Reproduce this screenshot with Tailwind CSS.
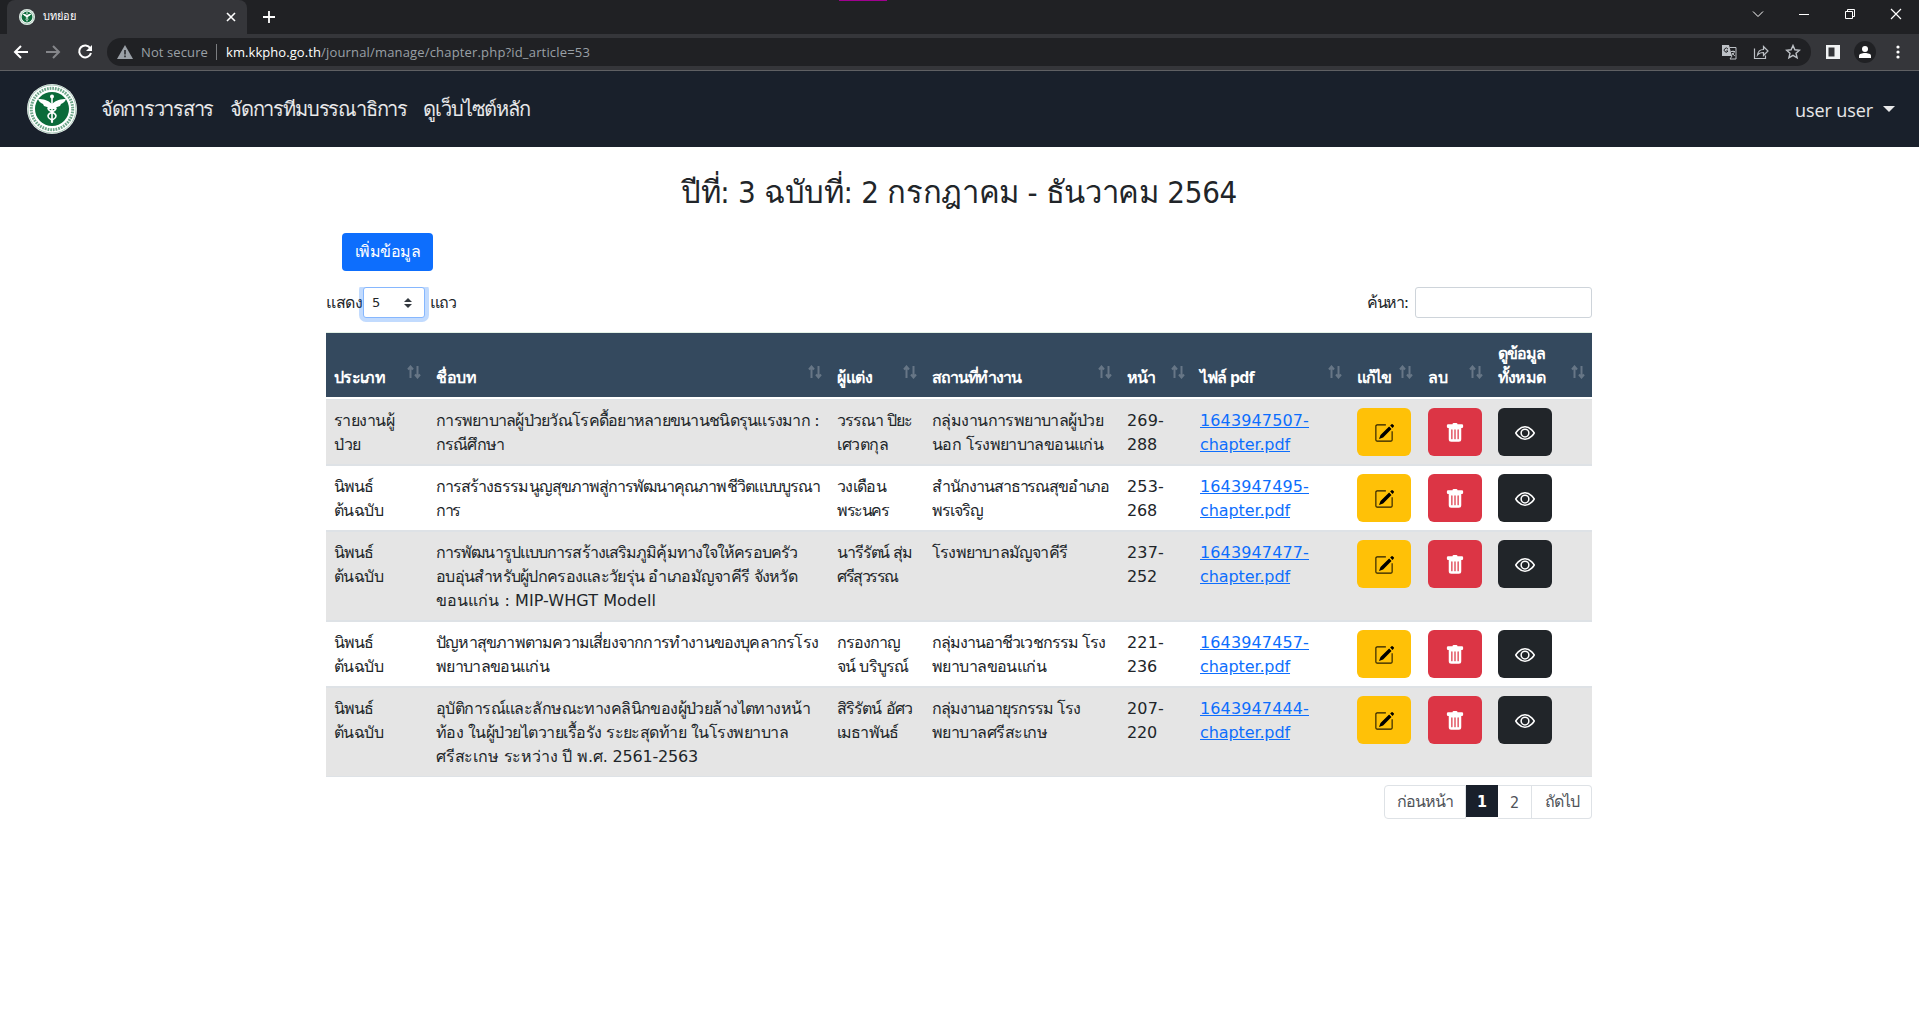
<!DOCTYPE html>
<html lang="th">
<head>
<meta charset="utf-8">
<title>บทย่อย</title>
<script src="https://cdn.jsdelivr.net/npm/@tailwindcss/browser@4"></script>
</head>
<body class="h-[1034px] overflow-hidden bg-white font-['DejaVu_Sans','Noto_Sans',sans-serif] text-base leading-6 text-[#212529]">
<svg class="hidden">
  <symbol id="edit" viewBox="0 0 16 16"><path d="M15.300 1.300a1.200 1.200 0 0 0-1.700 0l-.7.7 1.900 1.900.7-.7a1.200 1.200 0 0 0-.2-1.900zM14 4.700 12.100 2.800 5.200 9.500l-1.200 3.200 3.300-1.200z"/><path d="M9.500 1.500h-7a1 1 0 0 0-1 1v11a1 1 0 0 0 1 1h11a1 1 0 0 0 1-1v-7" fill="none" stroke="currentColor" stroke-width=".9" opacity=".85"/></symbol>
  <symbol id="trash" viewBox="0 0 16 16"><path d="M2.500 1a1 1 0 0 0-1 1v1a1 1 0 0 0 1 1H3v9a2 2 0 0 0 2 2h6a2 2 0 0 0 2-2V4h.5a1 1 0 0 0 1-1V2a1 1 0 0 0-1-1H10a1 1 0 0 0-1-1H7a1 1 0 0 0-1 1H2.500zm3 4a.5.5 0 0 1 .5.5v7a.5.5 0 0 1-1 0v-7a.5.5 0 0 1 .5-.5zM8 5a.5.5 0 0 1 .5.5v7a.5.5 0 0 1-1 0v-7A.5.5 0 0 1 8 5zm3 .5v7a.5.5 0 0 1-1 0v-7a.5.5 0 0 1 1 0z"/></symbol>
  <symbol id="eye" viewBox="0 0 16 16"><path d="M.6 8S3.500 3 8 3s7.400 5 7.400 5-2.900 5-7.400 5S.6 8 .6 8z" fill="none" stroke="currentColor" stroke-width="1.200"/><circle cx="8" cy="8" r="3.100" fill="none" stroke="currentColor" stroke-width="1.200"/></symbol>
  <symbol id="sort" viewBox="0 0 14 14"><path d="M3.500 13V2M1 4.500 3.500 1.500 6 4.500M10.500 1v11M8 9.500l2.500 3 2.500-3" fill="none" stroke="currentColor" stroke-width="2"/></symbol>
  <symbol id="seal" viewBox="0 0 50 50"><circle cx="25" cy="25" r="25" fill="#fff"/><circle cx="25" cy="25" r="24" fill="none" stroke="#0b6b3a" stroke-width=".6" opacity=".6"/><circle cx="25" cy="25" r="20.700" fill="none" stroke="#0b6b3a" stroke-width="3" stroke-dasharray="1.700 1" opacity=".6"/><circle cx="25" cy="25" r="17" fill="#0b6b3a"/><path d="M25 11v28M21 24c0 4 8 4 8 8s-6 3-4 6M29 24c0 4-8 4-8 8s6 3 4 6" fill="none" stroke="#fff" stroke-width="1.600"/><path d="M11 15c5 0 10 1 14 5 4-4 9-5 14-5-1 3-3 4-5 5l-1 2-3 1-2 2h-6l-2-2-3-1-1-2c-2-1-4-2-5-5z" fill="#fff"/><circle cx="25" cy="12.500" r="2" fill="#fff"/></symbol>
</svg>

<!-- browser tabs -->
<div class="relative flex h-[34px] bg-[#202124] pl-[7px]">
  <div class="absolute top-0 left-[839px] h-px w-12 bg-[#a0008f]"></div>
  <div class="flex w-[240px] items-center rounded-t-lg bg-[#35363a] pr-[10px] pl-3">
    <svg class="size-4"><use href="#seal"/></svg>
    <span class="ml-2 text-[11px] text-white" data-w="33">บทย่อย</span>
    <svg class="ml-auto size-3" viewBox="0 0 12 12" fill="none" stroke="#fff" stroke-width="1.600"><path d="m2 2 8 8M10 2l-8 8"/></svg>
  </div>
  <svg class="mt-[11px] ml-4 size-3" viewBox="0 0 12 12" stroke="#fff" stroke-width="1.800"><path d="M0 6h12M6 0v12"/></svg>
  <div class="ml-auto flex h-[28px] items-center gap-[34px] pr-[17px]">
    <svg class="size-3" viewBox="0 0 12 12" fill="none" stroke="#fff"><path d="m1 3.500 5 5 5-5"/></svg>
    <svg class="size-3" viewBox="0 0 12 12" stroke="#fff"><path d="M1 6.500h10"/></svg>
    <svg class="size-3" viewBox="0 0 12 12" fill="none" stroke="#fff"><path d="M1.500 3.500h7v7h-7zM3.500 3.500v-2h7v7h-2"/></svg>
    <svg class="size-3" viewBox="0 0 12 12" stroke="#fff" stroke-width="1.200"><path d="m1 1 10 10M11 1 1 11"/></svg>
  </div>
</div>

<!-- address bar -->
<div class="flex h-[37px] items-start border-b border-[#5f6063] bg-[#35363a] pt-1 pl-[13px] font-['Open_Sans','Noto_Sans',sans-serif] text-[13px]">
  <div class="flex h-7 w-[94px] items-center gap-4">
    <svg class="size-4" viewBox="0 0 16 16" fill="none" stroke="#fff" stroke-width="2"><path d="M15 8H2M8 2 2 8l6 6"/></svg>
    <svg class="size-4" viewBox="0 0 16 16" fill="none" stroke="#85868a" stroke-width="2"><path d="M1 8h13M8 2l6 6-6 6"/></svg>
    <svg class="size-4" viewBox="0 0 16 16" fill="none" stroke="#fff" stroke-width="2"><path d="M13.300 4.200A6 6 0 1 0 14 9"/><path d="M15 1v6H9z" fill="#fff" stroke="none"/></svg>
  </div>
  <div class="flex h-7 w-[1704px] items-center rounded-full bg-[#202124] pr-[10px] pl-[10px]">
    <svg class="h-[14px] w-4" viewBox="0 0 16 14"><path d="M8 0l8 14H0z" fill="#9aa0a6"/><path d="M8 5v4.500M8 10.500v1.700" stroke="#202124" stroke-width="1.500"/></svg>
    <span class="ml-2 w-[75px] whitespace-nowrap text-[#9aa0a6]"><span data-w="67">Not secure</span></span>
    <span class="h-4 w-px bg-[#7b7d80]"></span>
    <span class="ml-[9px] text-white" data-w="95">km.kkpho.go.th</span><span class="text-[#9aa0a6]" data-w="269">/journal/manage/chapter.php?id_article=53</span>
    <div class="ml-auto flex items-center gap-4">
      <svg class="size-4" viewBox="0 0 16 16"><path d="M1 1h7l3 11H1z" fill="#bdc1c6"/><path d="M8.500 3.500H15V15H9l2-3" fill="none" stroke="#bdc1c6"/><path d="M10 7.500h4M12 6.500v1M13.300 7.500c0 2-1.500 3-3 4M11 9l2.800 3" fill="none" stroke="#bdc1c6"/><path d="M7 5.200A2 2 0 1 0 7 7H5.200" fill="none" stroke="#202124"/></svg>
      <svg class="size-4" viewBox="0 0 16 16" fill="none" stroke="#bdc1c6" stroke-width="1.200"><path d="M1.500 4.500v10h11v-3M4.500 11c.5-4 3-5.500 6-5.500V2.500L15 7l-4.500 4.500V8.500c-3 0-4.500.5-6 2.500z"/></svg>
      <svg class="size-4" viewBox="0 0 16 16" fill="none" stroke="#bdc1c6" stroke-width="1.400"><path d="m8 1.500 1.900 4.300 4.600.4-3.500 3 1.100 4.600L8 11.400l-4.100 2.400L5 9.200l-3.500-3 4.600-.4z"/></svg>
    </div>
  </div>
  <svg class="mt-[7px] ml-[15px] size-[14px]" viewBox="0 0 14 14"><path d="M0 0h14v14H0z" fill="#f1f3f4"/><path d="M2.500 2.500h6v9h-6z" fill="#35363a"/></svg>
  <div class="mt-[3px] ml-[14px] flex size-[22px] items-center justify-center rounded-full bg-[#202124]"><svg class="size-3" viewBox="0 0 12 12" fill="#fff"><circle cx="6" cy="3" r="3"/><path d="M0 12V9.800C0 8 3 7 6 7s6 1 6 2.800V12z"/></svg></div>
  <svg class="mt-[7px] ml-[20px] h-[14px] w-1" viewBox="0 0 4 14" fill="#fff"><circle cx="2" cy="2" r="1.600"/><circle cx="2" cy="7" r="1.600"/><circle cx="2" cy="12" r="1.600"/></svg>
</div>

<!-- site navigation -->
<nav class="flex h-[76px] items-center bg-[#19202b] pr-6 pl-[27px] font-['Open_Sans','Noto_Sans',sans-serif] text-[20px] text-white/90">
  <svg class="size-[50px]"><use href="#seal"/></svg>
  <a class="ml-6" data-w="112">จัดการวารสาร</a>
  <a class="ml-[17px]" data-w="177">จัดการทีมบรรณาธิการ</a>
  <a class="ml-4" data-w="107">ดูเว็บไซต์หลัก</a>
  <a class="ml-auto pt-0.5 text-[18px]" data-w="78">user user</a>
  <span class="ml-[10px] border-x-6 border-t-6 border-x-transparent"></span>
</nav>

<main class="ml-[326px] w-[1266px]">
  <h1 class="mt-[26px] h-9 text-center font-['DejaVu_Sans_Condensed','DejaVu_Sans',sans-serif] text-[31px] leading-[38px]"><span data-w="556">ปีที่: 3 ฉบับที่: 2 กรกฎาคม - ธันวาคม 2564</span></h1>
  <button class="mt-6 ml-4 block h-[38px] w-[91px] rounded bg-[#0d6efd] text-white"><span data-w="65">เพิ่มข้อมูล</span></button>
  <div class="mt-4 flex h-[31px] items-center">
    <span data-w="36">แสดง</span>
    <div class="ml-px [clip-path:inset(0_-6px_-6px_-6px)]">
      <div class="flex h-[31px] w-[62px] items-center justify-between rounded-[3px] border border-[#86b7fe] bg-white pr-3 pl-2 text-[13px] shadow-[0_0_0_4px_#0d6efd40]"><span>5</span>
      <svg class="h-[10px] w-2" viewBox="0 0 8 10" fill="#343a40"><path d="M4 0l4 4H0zM4 10l4-4H0z"/></svg></div>
    </div>
    <span class="ml-[5px]" data-w="26">แถว</span>
    <span class="ml-auto" data-w="41">ค้นหา:</span>
    <input class="ml-[7px] h-[31px] w-[177px] rounded-[3px] border border-[#ced4da]">
  </div>
  <div class="mt-[14px] border-t border-[#e3f1e6]"></div>
  <div id="head" class="grid h-16 grid-cols-[102px_401px_95px_195px_73px_157px_71px_70px_102px] items-end bg-[#34495e] font-['Open_Sans','Noto_Sans',sans-serif] font-bold text-white"></div>
  <div id="rows" class="mt-0.5"></div>
  <div class="mt-2 flex h-[34px] items-start justify-end text-[#4f5359]">
    <div class="flex h-[34px] w-[82px] items-center justify-center rounded-l border border-[#dee2e6]"><span data-w="56">ก่อนหน้า</span></div>
    <div class="flex h-8 w-8 items-center justify-center bg-[#19202b] pt-0.5 font-['DejaVu_Sans_Condensed'] font-bold text-white">1</div>
    <div class="flex h-[34px] w-[34px] items-center justify-center border-y border-r border-[#dee2e6] pt-0.5 font-['DejaVu_Sans_Condensed']">2</div>
    <div class="flex h-[34px] w-[60px] items-center justify-center rounded-r border border-l-0 border-[#dee2e6]"><span data-w="34">ถัดไป</span></div>
  </div>
</main>

<script>
const heads = [[["ประเภท",51]],[["ชื่อบท",40]],[["ผู้แต่ง",35]],[["สถานที่ทำงาน",89]],[["หน้า",28]],[["ไฟล์ pdf",54]],[["แก้ไข",33]],[["ลบ",20]],[["ดูข้อมูล",47],["ทั้งหมด",47]]];
const original = [["นิพนธ์",39],["ต้นฉบับ",49]];
const pages = (a, b) => [[a + "-",37],[b,30]];
const file = n => [[n + "-",109],["chapter.pdf",90]];
const rows = [
  [[["รายงานผู้",60],["ป่วย",27]], [["การพยาบาลผู้ป่วยวัณโรคดื้อยาหลายขนานชนิดรุนแรงมาก :",383],["กรณีศึกษา",68]], [["วรรณา ปิยะ",75],["เศวตกุล",51]], [["กลุ่มงานการพยาบาลผู้ป่วย",171],["นอก โรงพยาบาลขอนแก่น",171]], pages("269","288"), file("1643947507")],
  [original, [["การสร้างธรรมนูญสุขภาพสู่การพัฒนาคุณภาพชีวิตแบบบูรณา",384],["การ",24]], [["วงเดือน",49],["พระนคร",51]], [["สำนักงานสาธารณสุขอำเภอ",177],["พรเจริญ",51]], pages("253","268"), file("1643947495")],
  [original, [["การพัฒนารูปแบบการสร้างเสริมภูมิคุ้มทางใจให้ครอบครัว",361],["อบอุ่นสำหรับผู้ปกครองและวัยรุ่น อำเภอมัญจาคีรี จังหวัด",361],["ขอนแก่น : MIP-WHGT Modell",220]], [["นารีรัตน์ สุ่ม",75],["ศรีสุวรรณ",61]], [["โรงพยาบาลมัญจาคีรี",135]], pages("237","252"), file("1643947477")],
  [original, [["ปัญหาสุขภาพตามความเสี่ยงจากการทำงานของบุคลากรโรง",382],["พยาบาลขอนแก่น",113]], [["กรองกาญ",63],["จน์ บริบูรณ์",71]], [["กลุ่มงานอาชีวเวชกรรม โรง",173],["พยาบาลขอนแก่น",114]], pages("221","236"), file("1643947457")],
  [original, [["อุบัติการณ์และลักษณะทางคลินิกของผู้ป่วยล้างไตทางหน้า",374],["ท้อง ในผู้ป่วยไตวายเรื้อรัง ระยะสุดท้าย ในโรงพยาบาล",352],["ศรีสะเกษ ระหว่าง ปี พ.ศ. 2561-2563",262]], [["สิริรัตน์ อัศว",75],["เมธาพันธ์",61]], [["กลุ่มงานอายุรกรรม โรง",148],["พยาบาลศรีสะเกษ",115]], pages("207","220"), file("1643947444")]
];
const lines = c => c.map(([t, w]) => `<div class="h-6"><span data-w="${w}">${t}</span></div>`).join("");
document.getElementById("head").innerHTML = heads.map(c => `<div class="flex items-end justify-between p-2"><div>${lines(c)}</div><svg class="-mr-px mb-[10px] size-[14px] text-white/25"><use href="#sort"/></svg></div>`).join("");
const btn = (icon, cls) => `<div class="p-2"><button class="flex h-12 w-[54px] items-center justify-center rounded-md pt-0.5 ${cls}"><svg class="size-5" fill="currentColor"><use href="#${icon}"/></svg></button></div>`;
document.getElementById("rows").innerHTML = rows.map(r => `<div class="grid grid-cols-[102px_401px_95px_195px_73px_157px_71px_70px_102px] border-y border-[#dee2e6] odd:bg-[#e5e5e5]">${r.map((c, i) => `<div class="px-2 pt-[9px] pb-[7px] ${i === 5 ? "text-[#0d6efd] underline" : ""}">${lines(c)}</div>`).join("")}${btn("edit", "bg-[#ffc107] text-black")}${btn("trash", "bg-[#dc3545] text-white")}${btn("eye", "bg-[#212529] text-white")}</div>`).join("");

const seg = new Intl.Segmenter("th", {granularity: "grapheme"});
function fit() {
  document.querySelectorAll("[data-w]").forEach(e => {
    e.style.whiteSpace = "nowrap";
    e.style.letterSpacing = "0px";
    const range = document.createRange();
    range.selectNodeContents(e);
    const n = [...seg.segment(e.textContent)].length;
    e.style.letterSpacing = (e.dataset.w - range.getBoundingClientRect().width) / n + "px";
  });
}
fit();
document.fonts.ready.then(fit);
window.addEventListener("load", () => { fit(); requestAnimationFrame(fit); setTimeout(fit, 100); });
</script>
</body>
</html>
